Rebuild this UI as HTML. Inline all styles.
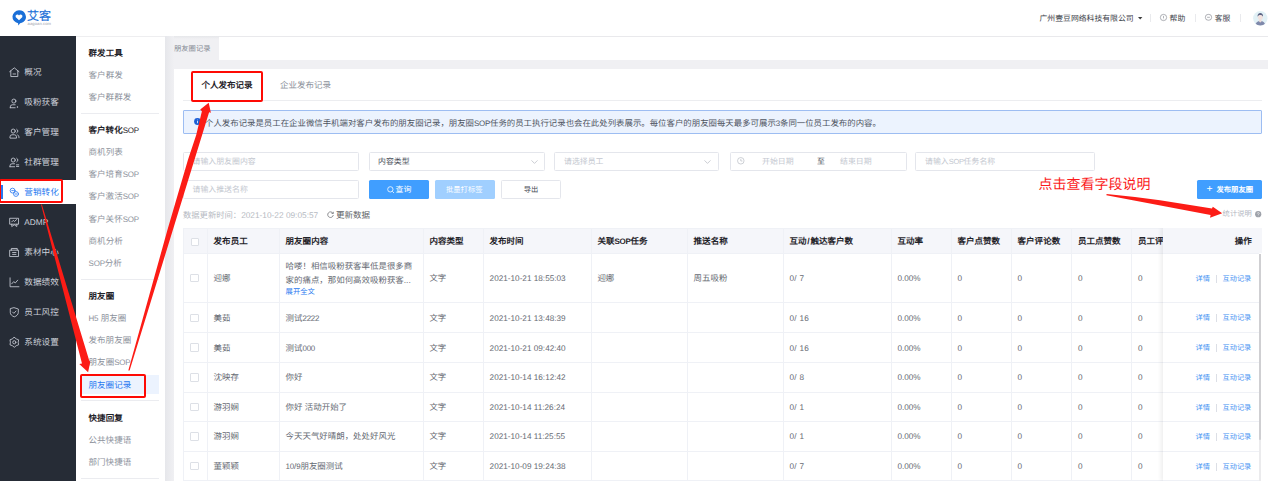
<!DOCTYPE html>
<html lang="zh-CN">
<head>
<meta charset="utf-8">
<title>朋友圈记录</title>
<style>
html,body{margin:0;padding:0;}
body{text-rendering:geometricPrecision;width:1268px;height:481px;overflow:hidden;background:#fff;position:relative;font-family:"Liberation Sans",sans-serif;}
.t{position:absolute;white-space:nowrap;line-height:12px;height:12px;margin:0;padding:0;}
.r{position:absolute;box-sizing:border-box;}
svg{position:absolute;overflow:visible;}
.l{font-size:0.94em;letter-spacing:-0.25px;}
.h .l{font-weight:normal;}
</style>
</head>
<body>

<!-- layout backgrounds -->
<div class="r" style="left:0.00px;top:36.00px;width:165.00px;height:0.80px;background:#eeeef0;"></div>
<div class="r" style="left:0.00px;top:36.00px;width:75.50px;height:445.00px;background:#262c36;"></div>
<div class="r" style="left:75.50px;top:36.80px;width:89.50px;height:445.00px;background:#fff;"></div>
<div class="r" style="left:165.00px;top:36.00px;width:1103.00px;height:445.00px;background:#f0f0f3;"></div>
<div class="r" style="left:165.00px;top:36.00px;width:1103.00px;height:3.00px;background:linear-gradient(180deg,#e6e7ea,#f0f0f3);"></div>
<div class="r" style="left:219.00px;top:36.20px;width:1049.00px;height:24.00px;background:#fff;"></div>
<div class="r" style="left:219.00px;top:36.00px;width:1049.00px;height:0.80px;background:#e9e9ec;"></div>
<div class="r" style="left:165.00px;top:36.20px;width:9.00px;height:445.00px;background:linear-gradient(90deg,#e6e7eb,#f0f0f3);"></div>
<div class="r" style="left:174.00px;top:69.00px;width:1094.00px;height:412.00px;background:#fff;"></div>
<!-- header -->
<svg style="left:12px;top:9.5px" width="14" height="16" viewBox="0 0 14 16"><path d="M7 0.3a6.8 6.5 0 0 1 4.3 11.6 6.8 6.5 0 0 1-3.2 1.3L6.3 15.4 6.1 13.2A6.8 6.5 0 0 1 7 0.3z" fill="#1a6fd8"/><path d="M7 10.2L3.800 7.300a1.700 1.700 0 0 1 3.200-1.800 1.700 1.700 0 0 1 3.200 1.800z" fill="#fff"/></svg>
<div class="t" style="top:10.00px;font-size:12px;color:#1a6fd8;width:24.07px;text-align-last:justify;left:27.00px;-webkit-text-stroke:0.2px #1a6fd8;">艾客</div>
<div class="t" style="top:18.20px;font-size:4.1px;color:#9aa0aa;left:27.50px;letter-spacing:0.1px;">aagoan.com</div>
<div class="t" style="top:12.60px;font-size:7.85px;color:#3a3e47;width:94.17px;text-align-last:justify;left:1039.50px;">广州壹豆网络科技有限公司</div>
<svg style="left:1137.8px;top:16.7px" width="5" height="3" viewBox="0 0 5 3"><path d="M0 0h4.4L2.2 2.6z" fill="#3c3c3c"/></svg>
<div class="r" style="left:1150.30px;top:14.20px;width:0.70px;height:8.20px;background:#e9eaed;"></div>
<svg style="left:1159.9px;top:14.2px" width="7" height="7" viewBox="0 0 7 7"><circle cx="3.5" cy="3.5" r="3.15" fill="none" stroke="#70747d" stroke-width="0.55"/><path d="M3.5 1.9v2.2M3.5 4.7v0.5" stroke="#70747d" stroke-width="0.55"/></svg>
<div class="t" style="top:12.60px;font-size:7.85px;color:#3a3e47;width:15.74px;text-align-last:justify;left:1169.50px;">帮助</div>
<div class="r" style="left:1194.90px;top:14.20px;width:0.70px;height:8.20px;background:#e9eaed;"></div>
<svg style="left:1204.8px;top:14.2px" width="7" height="7" viewBox="0 0 7 7"><rect x="0.4" y="0.4" width="6.2" height="5.8" rx="2.7" fill="none" stroke="#70747d" stroke-width="0.55"/><path d="M2.1 3.3h2.8" stroke="#70747d" stroke-width="0.55"/></svg>
<div class="t" style="top:12.60px;font-size:7.85px;color:#3a3e47;width:15.74px;text-align-last:justify;left:1214.70px;">客服</div>
<div class="r" style="left:1239.90px;top:14.20px;width:0.70px;height:8.20px;background:#e9eaed;"></div>
<svg style="left:1252.8px;top:11.3px" width="15" height="15" viewBox="0 0 15 15"><defs><clipPath id="av"><circle cx="7.3" cy="7.3" r="7.2"/></clipPath></defs><circle cx="7.3" cy="7.3" r="7.2" fill="#e2f1f6"/><g clip-path="url(#av)"><path d="M2.4 15c0-3.4 1.9-4.9 4.9-4.9s4.9 1.500 4.900 4.900z" fill="#7f89ab"/><path d="M6.200 8.500h2.200v2.200l-1.100 0.700-1.100-0.700z" fill="#efdcd8"/><ellipse cx="7.300" cy="5.900" rx="2.500" ry="3" fill="#f1e2df"/><path d="M4.600 5.700c-0.300-2.700 1.100-3.800 2.700-3.800s3 1.100 2.700 3.800c-0.500-1.200-1.300-1.800-2.700-1.800s-2.200 0.600-2.700 1.800z" fill="#5b6384"/></g></svg>
<!-- sidebar -->
<div class="r" style="left:0.00px;top:179.50px;width:75.50px;height:24.30px;background:#fff;"></div>
<div class="r" style="left:1.00px;top:184.50px;width:2.00px;height:14.30px;background:#2878f0;"></div>
<svg style="left:9.2px;top:67.0px" width="10.6" height="10.6" viewBox="0 0 10 10" fill="none" stroke="#cdd1da" stroke-width="0.78" stroke-linecap="round" stroke-linejoin="round"><path d="M0.6 4.4L5 0.8 9.4 4.4M1.7 3.7V9h6.6V3.7M3.8 6.6h2.4"/></svg>
<div class="t" style="top:66.30px;font-size:8.6px;color:#cdd1da;width:17.25px;text-align-last:justify;left:24.30px;">概况</div>
<svg style="left:9.2px;top:97.7px" width="10.6" height="10.6" viewBox="0 0 10 10" fill="none" stroke="#cdd1da" stroke-width="0.78" stroke-linecap="round" stroke-linejoin="round"><circle cx="4.6" cy="2.9" r="1.9"/><path d="M1.2 9.2V8.4a2 2 0 0 1 2-2h2.6M1.2 9.2h4.6"/><circle cx="8" cy="8.6" r="0.7" fill="#cdd1da" stroke="none"/></svg>
<div class="t" style="top:96.40px;font-size:8.6px;color:#cdd1da;width:34.44px;text-align-last:justify;left:24.30px;">吸粉获客</div>
<svg style="left:9.2px;top:127.5px" width="10.6" height="10.6" viewBox="0 0 10 10" fill="none" stroke="#cdd1da" stroke-width="0.78" stroke-linecap="round" stroke-linejoin="round"><circle cx="4" cy="2.9" r="1.9"/><path d="M0.9 9.2V8.4a2 2 0 0 1 2-2h2.2a2 2 0 0 1 2 2v0.8zM7.3 1.2a1.9 1.9 0 0 1 0 3.4M8.2 6.6a2 2 0 0 1 1.2 1.8v0.8"/></svg>
<div class="t" style="top:126.20px;font-size:8.6px;color:#cdd1da;width:34.44px;text-align-last:justify;left:24.30px;">客户管理</div>
<svg style="left:9.2px;top:157.1px" width="10.6" height="10.6" viewBox="0 0 10 10" fill="none" stroke="#cdd1da" stroke-width="0.78" stroke-linecap="round" stroke-linejoin="round"><circle cx="4" cy="2.9" r="1.9"/><path d="M0.9 9.2V8.4a2 2 0 0 1 2-2h2.4M0.9 9.2h4.4M7.3 1.2a1.9 1.9 0 0 1 0 3.4"/><path d="M7 7.4h2.2M7 8.9h2.2" /></svg>
<div class="t" style="top:155.80px;font-size:8.6px;color:#cdd1da;width:34.44px;text-align-last:justify;left:24.30px;">社群管理</div>
<svg style="left:9.2px;top:186.8px" width="10.6" height="10.6" viewBox="0 0 10 10" fill="none" stroke="#2878f0" stroke-width="0.78" stroke-linecap="round" stroke-linejoin="round"><circle cx="3.4" cy="3.4" r="2.3"/><circle cx="6.6" cy="6.6" r="2.3"/><path d="M2.6 3.4h1.6M5.8 6.6h1.6"/></svg>
<div class="t" style="top:185.50px;font-size:8.6px;color:#2878f0;width:34.44px;text-align-last:justify;left:24.30px;">营销转化</div>
<svg style="left:9.2px;top:217.1px" width="10.6" height="10.6" viewBox="0 0 10 10" fill="none" stroke="#cdd1da" stroke-width="0.78" stroke-linecap="round" stroke-linejoin="round"><path d="M1 1.2h8v5.6H1zM2.6 6.8v2.2L5 7.4l2.4 1.6V6.8M2.6 4.6l1.4-1.4 1.2 1 2-1.8"/></svg>
<div class="t" style="top:215.80px;font-size:8.3px;color:#cdd1da;left:24.30px;">ADMP</div>
<svg style="left:9.2px;top:247.1px" width="10.6" height="10.6" viewBox="0 0 10 10" fill="none" stroke="#cdd1da" stroke-width="0.78" stroke-linecap="round" stroke-linejoin="round"><path d="M2.2 3V1.4h5.6V3M1 3h8v6H1zM3.4 5.2h3.2M3.4 7h3.2"/></svg>
<div class="t" style="top:245.80px;font-size:8.6px;color:#cdd1da;width:34.44px;text-align-last:justify;left:24.30px;">素材中心</div>
<svg style="left:9.2px;top:276.9px" width="10.6" height="10.6" viewBox="0 0 10 10" fill="none" stroke="#cdd1da" stroke-width="0.78" stroke-linecap="round" stroke-linejoin="round"><path d="M1 0.8V9.2H9.4M2.6 6.4l1.8-2 1.6 1.2 2.2-2.6"/></svg>
<div class="t" style="top:275.60px;font-size:8.6px;color:#cdd1da;width:34.44px;text-align-last:justify;left:24.30px;">数据绩效</div>
<svg style="left:9.2px;top:307.1px" width="10.6" height="10.6" viewBox="0 0 10 10" fill="none" stroke="#cdd1da" stroke-width="0.78" stroke-linecap="round" stroke-linejoin="round"><path d="M5 0.7l3.8 1.2v3.2c0 2-1.6 3.4-3.8 4.2C2.800 8.500 1.200 7.100 1.200 5.100V1.900zM3.400 4.800l1.200 1.200 2-2.200"/></svg>
<div class="t" style="top:305.80px;font-size:8.6px;color:#cdd1da;width:34.44px;text-align-last:justify;left:24.30px;">员工风控</div>
<svg style="left:9.2px;top:337.1px" width="10.6" height="10.6" viewBox="0 0 10 10" fill="none" stroke="#cdd1da" stroke-width="0.78" stroke-linecap="round" stroke-linejoin="round"><path d="M5.00 0.30 L6.85 1.80 L9.07 2.65 L8.70 5.00 L9.07 7.35 L6.85 8.20 L5.00 9.70 L3.15 8.20 L0.93 7.35 L1.30 5.00 L0.93 2.65 L3.15 1.80z"/><circle cx="5" cy="5" r="1.5"/></svg>
<div class="t" style="top:335.80px;font-size:8.6px;color:#cdd1da;width:34.44px;text-align-last:justify;left:24.30px;">系统设置</div>
<!-- submenu -->
<div class="r" style="left:81.00px;top:375.00px;width:78.00px;height:19.30px;background:#ecf3fe;"></div>
<div class="r" style="left:81.00px;top:112.60px;width:78.00px;height:0.80px;background:#ebecf0;"></div>
<div class="r" style="left:81.00px;top:278.70px;width:78.00px;height:0.80px;background:#ebecf0;"></div>
<div class="r" style="left:81.00px;top:400.40px;width:78.00px;height:0.80px;background:#ebecf0;"></div>
<div class="r" style="left:81.00px;top:478.00px;width:78.00px;height:0.80px;background:#ebecf0;"></div>
<div class="t h" style="top:47.00px;font-size:8.5px;color:#1f2329;width:34.07px;text-align-last:justify;left:88.60px;font-weight:bold;">群发工具</div>
<div class="t" style="top:69.20px;font-size:8.5px;color:#8d929c;width:34.07px;text-align-last:justify;left:88.60px;">客户群发</div>
<div class="t" style="top:91.00px;font-size:8.5px;color:#8d929c;width:42.57px;text-align-last:justify;left:88.60px;">客户群群发</div>
<div class="t h" style="top:124.30px;font-size:8.5px;color:#1f2329;width:50.19px;text-align-last:justify;left:88.60px;font-weight:bold;">客户转化<span class="l">SOP</span></div>
<div class="t" style="top:146.30px;font-size:8.5px;color:#8d929c;width:34.07px;text-align-last:justify;left:88.60px;">商机列表</div>
<div class="t" style="top:168.20px;font-size:8.5px;color:#8d929c;width:50.19px;text-align-last:justify;left:88.60px;">客户培育<span class="l">SOP</span></div>
<div class="t" style="top:190.40px;font-size:8.5px;color:#8d929c;width:50.19px;text-align-last:justify;left:88.60px;">客户激活<span class="l">SOP</span></div>
<div class="t" style="top:212.50px;font-size:8.5px;color:#8d929c;width:50.19px;text-align-last:justify;left:88.60px;">客户关怀<span class="l">SOP</span></div>
<div class="t" style="top:234.50px;font-size:8.5px;color:#8d929c;width:34.07px;text-align-last:justify;left:88.60px;">商机分析</div>
<div class="t" style="top:256.60px;font-size:8.5px;color:#8d929c;width:33.19px;text-align-last:justify;left:88.60px;"><span class="l">SOP</span>分析</div>
<div class="t h" style="top:290.30px;font-size:8.5px;color:#1f2329;width:25.57px;text-align-last:justify;left:88.60px;font-weight:bold;">朋友圈</div>
<div class="t" style="top:311.70px;font-size:8.5px;color:#8d929c;width:37.64px;text-align-last:justify;left:88.60px;"><span class="l">H5</span> 朋友圈</div>
<div class="t" style="top:334.30px;font-size:8.5px;color:#8d929c;width:42.57px;text-align-last:justify;left:88.60px;">发布朋友圈</div>
<div class="t" style="top:356.30px;font-size:8.5px;color:#8d929c;width:41.69px;text-align-last:justify;left:88.60px;">朋友圈<span class="l">SOP</span></div>
<div class="t" style="top:378.50px;font-size:8.5px;color:#2878f0;width:42.57px;text-align-last:justify;left:88.60px;">朋友圈记录</div>
<div class="t h" style="top:412.20px;font-size:8.5px;color:#1f2329;width:34.07px;text-align-last:justify;left:88.60px;font-weight:bold;">快捷回复</div>
<div class="t" style="top:434.00px;font-size:8.5px;color:#8d929c;width:42.57px;text-align-last:justify;left:88.60px;">公共快捷语</div>
<div class="t" style="top:455.80px;font-size:8.5px;color:#8d929c;width:42.57px;text-align-last:justify;left:88.60px;">部门快捷语</div>
<!-- page tab -->
<div class="t" style="top:43.00px;font-size:7.3px;color:#858a94;width:36.53px;text-align-last:justify;left:174.00px;">朋友圈记录</div>
<!-- record tabs -->
<div class="t" style="top:79.20px;font-size:8.5px;color:#1f2329;width:51.07px;text-align-last:justify;left:201.50px;font-weight:bold;">个人发布记录</div>
<div class="t" style="top:79.20px;font-size:8.5px;color:#8d929c;width:51.07px;text-align-last:justify;left:280.00px;">企业发布记录</div>
<div class="r" style="left:183.00px;top:100.30px;width:1079.00px;height:0.80px;background:#ecedf0;"></div>
<!-- info banner -->
<div class="r" style="left:183.00px;top:110.20px;width:1079.00px;height:23.40px;background:#ecf3fe;border:0.8px solid #9dbdf2;border-radius:1px;"></div>
<svg style="left:193.8px;top:118.2px" width="7" height="7" viewBox="0 0 7 7"><circle cx="3.5" cy="3.5" r="3.4" fill="#1c5fd6"/><path d="M3.5 3v2.2M3.5 1.7v0.6" stroke="#fff" stroke-width="0.8"/></svg>
<div class="t" style="top:116.60px;font-size:8.42px;color:#4e535e;width:675.85px;text-align-last:justify;left:205.00px;">个人发布记录是员工在企业微信手机端对客户发布的朋友圈记录，朋友圈<span class="l">SOP</span>任务的员工执行记录也会在此处列表展示。每位客户的朋友圈每天最多可展示<span class="l">3</span>条同一位员工发布的内容。</div>
<!-- filters -->
<div class="r" style="left:183.00px;top:152.40px;width:176.30px;height:18.40px;border:0.8px solid #e4e6ec;border-radius:1.5px;background:#fff;"></div>
<div class="t" style="top:155.80px;font-size:7.9px;color:#c3c7cf;width:63.19px;text-align-last:justify;left:192.50px;">请输入朋友圈内容</div>
<div class="r" style="left:368.70px;top:152.40px;width:176.00px;height:18.40px;border:0.8px solid #e4e6ec;border-radius:1.5px;background:#fff;"></div>
<div class="t" style="top:155.80px;font-size:7.9px;color:#4a4f5a;width:31.63px;text-align-last:justify;left:378.00px;">内容类型</div>
<svg style="left:531px;top:160px" width="7" height="4" viewBox="0 0 7 4"><path d="M0.500 0.400L3.500 3.400 6.500 0.400" fill="none" stroke="#b4b8c0" stroke-width="0.700"/></svg>
<div class="r" style="left:554.00px;top:152.40px;width:164.60px;height:18.40px;border:0.8px solid #e4e6ec;border-radius:1.5px;background:#fff;"></div>
<div class="t" style="top:155.80px;font-size:7.9px;color:#c3c7cf;width:39.52px;text-align-last:justify;left:564.00px;">请选择员工</div>
<svg style="left:704.300px;top:160px" width="7" height="4" viewBox="0 0 7 4"><path d="M0.500 0.400L3.500 3.400 6.500 0.400" fill="none" stroke="#b4b8c0" stroke-width="0.700"/></svg>
<div class="r" style="left:730.20px;top:152.40px;width:176.40px;height:18.40px;border:0.8px solid #e4e6ec;border-radius:1.5px;background:#fff;"></div>
<svg style="left:737.2px;top:157px" width="7.6" height="7.6" viewBox="0 0 7 7"><circle cx="3.500" cy="3.500" r="3" fill="none" stroke="#b4b8c0" stroke-width="0.600"/><path d="M3.500 1.800v1.900h1.500" fill="none" stroke="#b4b8c0" stroke-width="0.600"/></svg>
<div class="t" style="top:155.80px;font-size:7.9px;color:#c3c7cf;width:31.63px;text-align-last:justify;left:762.00px;">开始日期</div>
<div class="t" style="top:155.80px;font-size:7.9px;color:#4a4f5a;left:817.00px;">至</div>
<div class="t" style="top:155.80px;font-size:7.9px;color:#c3c7cf;width:31.63px;text-align-last:justify;left:840.00px;">结束日期</div>
<div class="r" style="left:915.20px;top:152.40px;width:180.20px;height:18.40px;border:0.8px solid #e4e6ec;border-radius:1.5px;background:#fff;"></div>
<div class="t" style="top:155.80px;font-size:7.9px;color:#c3c7cf;width:70.22px;text-align-last:justify;left:925.00px;">请输入<span class="l">SOP</span>任务名称</div>
<div class="r" style="left:183.00px;top:180.40px;width:176.30px;height:18.40px;border:0.8px solid #e4e6ec;border-radius:1.5px;background:#fff;"></div>
<div class="t" style="top:184.40px;font-size:7.9px;color:#c3c7cf;width:55.30px;text-align-last:justify;left:192.50px;">请输入推送名称</div>
<div class="r" style="left:368.70px;top:180.00px;width:60.20px;height:18.90px;background:#409eff;border-radius:1.5px;"></div>
<svg style="left:386.5px;top:185.8px" width="7.8" height="7.8" viewBox="0 0 7 7"><circle cx="3" cy="3" r="2.400" fill="none" stroke="#fff" stroke-width="0.700"/><path d="M4.800 4.800l1.500 1.500" stroke="#fff" stroke-width="0.700"/></svg>
<div class="t" style="top:183.80px;font-size:7.9px;color:#fff;width:15.85px;text-align-last:justify;left:395.50px;">查询</div>
<div class="r" style="left:435.00px;top:180.00px;width:59.60px;height:18.90px;background:#a0cfff;border-radius:1.5px;"></div>
<div class="t" style="top:183.80px;font-size:7.3px;color:#fff;width:36.53px;text-align-last:justify;left:446.00px;">批量打标签</div>
<div class="r" style="left:500.50px;top:180.00px;width:60.20px;height:18.90px;border:0.8px solid #e4e6ec;border-radius:1.5px;background:#fff;"></div>
<div class="t" style="top:183.80px;font-size:7.3px;color:#4a4f5a;width:14.64px;text-align-last:justify;left:523.70px;">导出</div>
<div class="r" style="left:1197.00px;top:180.00px;width:65.00px;height:18.90px;background:#409eff;border-radius:1.5px;"></div>
<div class="t" style="top:183.40px;font-size:10.5px;color:#fff;left:1206.60px;">+</div>
<div class="t" style="top:183.80px;font-size:7.3px;color:#fff;width:36.53px;text-align-last:justify;left:1216.50px;font-weight:bold;">发布朋友圈</div>
<!-- update line -->
<div class="t" style="top:209.20px;font-size:8.3px;color:#b6bac2;width:135.19px;text-align-last:justify;left:183.00px;">数据更新时间：<span>2021-10-22 09:05:57</span></div>
<svg style="left:326.8px;top:210.9px" width="7" height="7" viewBox="0 0 7 7"><path d="M5.900 2.200A2.800 2.800 0 1 0 6.300 4" fill="none" stroke="#606266" stroke-width="0.700"/><path d="M6.300 0.800v1.700H4.600" fill="none" stroke="#606266" stroke-width="0.700"/></svg>
<div class="t" style="top:208.90px;font-size:8.5px;color:#606266;width:34.07px;text-align-last:justify;left:336.00px;">更新数据</div>
<div class="t" style="top:207.90px;font-size:7.3px;color:#b3b7bf;width:29.24px;text-align-last:justify;left:1222.60px;">统计说明</div>
<svg style="left:1255.300px;top:210.700px" width="7" height="7" viewBox="0 0 7 7"><circle cx="3.200" cy="3.200" r="3.100" fill="#9da1a9"/><path d="M2.300 2.500a0.950 0.950 0 1 1 1.300 0.900c-0.300 0.150-0.400 0.300-0.400 0.600M3.200 4.700v0.500" fill="none" stroke="#fff" stroke-width="0.600"/></svg>
<!-- table -->
<div class="r" style="left:183.00px;top:228.00px;width:1079.00px;height:25.20px;background:#f5f6fa;"></div>
<div class="r" style="left:183.00px;top:252.80px;width:1076.00px;height:0.80px;background:#eff1f6;"></div>
<div class="r" style="left:183.00px;top:302.10px;width:1076.00px;height:0.80px;background:#eff1f6;"></div>
<div class="r" style="left:183.00px;top:332.10px;width:1076.00px;height:0.80px;background:#eff1f6;"></div>
<div class="r" style="left:183.00px;top:361.80px;width:1076.00px;height:0.80px;background:#eff1f6;"></div>
<div class="r" style="left:183.00px;top:391.60px;width:1076.00px;height:0.80px;background:#eff1f6;"></div>
<div class="r" style="left:183.00px;top:420.90px;width:1076.00px;height:0.80px;background:#eff1f6;"></div>
<div class="r" style="left:183.00px;top:450.60px;width:1076.00px;height:0.80px;background:#eff1f6;"></div>
<div class="r" style="left:183.00px;top:480.00px;width:1076.00px;height:0.80px;background:#eff1f6;"></div>
<div class="r" style="left:182.60px;top:228.00px;width:0.80px;height:253.60px;background:#eff1f6;"></div>
<div class="r" style="left:207.00px;top:228.00px;width:0.80px;height:253.60px;background:#eff1f6;"></div>
<div class="r" style="left:279.00px;top:228.00px;width:0.80px;height:253.60px;background:#eff1f6;"></div>
<div class="r" style="left:422.80px;top:228.00px;width:0.80px;height:253.60px;background:#eff1f6;"></div>
<div class="r" style="left:482.80px;top:228.00px;width:0.80px;height:253.60px;background:#eff1f6;"></div>
<div class="r" style="left:591.00px;top:228.00px;width:0.80px;height:253.60px;background:#eff1f6;"></div>
<div class="r" style="left:687.00px;top:228.00px;width:0.80px;height:253.60px;background:#eff1f6;"></div>
<div class="r" style="left:782.80px;top:228.00px;width:0.80px;height:253.60px;background:#eff1f6;"></div>
<div class="r" style="left:890.80px;top:228.00px;width:0.80px;height:253.60px;background:#eff1f6;"></div>
<div class="r" style="left:950.80px;top:228.00px;width:0.80px;height:253.60px;background:#eff1f6;"></div>
<div class="r" style="left:1010.60px;top:228.00px;width:0.80px;height:253.60px;background:#eff1f6;"></div>
<div class="r" style="left:1071.00px;top:228.00px;width:0.80px;height:253.60px;background:#eff1f6;"></div>
<div class="r" style="left:1131.00px;top:228.00px;width:0.80px;height:253.60px;background:#eff1f6;"></div>
<div class="r" style="left:183.00px;top:228.00px;width:1079.00px;height:0.80px;background:#eff1f6;"></div>
<div class="t" style="top:235.20px;font-size:8.5px;color:#1f2329;width:34.07px;text-align-last:justify;left:213.60px;font-weight:bold;">发布员工</div>
<div class="t" style="top:235.20px;font-size:8.5px;color:#1f2329;width:42.57px;text-align-last:justify;left:285.60px;font-weight:bold;">朋友圈内容</div>
<div class="t" style="top:235.20px;font-size:8.5px;color:#1f2329;width:34.07px;text-align-last:justify;left:429.40px;font-weight:bold;">内容类型</div>
<div class="t" style="top:235.20px;font-size:8.5px;color:#1f2329;width:34.07px;text-align-last:justify;left:489.40px;font-weight:bold;">发布时间</div>
<div class="t" style="top:235.20px;font-size:8.5px;color:#1f2329;width:50.21px;text-align-last:justify;left:597.40px;font-weight:bold;">关联<span class="l">SOP</span>任务</div>
<div class="t" style="top:235.20px;font-size:8.5px;color:#1f2329;width:34.07px;text-align-last:justify;left:693.60px;font-weight:bold;">推送名称</div>
<div class="t" style="top:235.20px;font-size:8.5px;color:#1f2329;width:63.55px;text-align-last:justify;left:789.40px;font-weight:bold;">互动<span style="padding:0 0.8px">/</span>触达客户数</div>
<div class="t" style="top:235.20px;font-size:8.5px;color:#1f2329;width:25.57px;text-align-last:justify;left:897.40px;font-weight:bold;">互动率</div>
<div class="t" style="top:235.20px;font-size:8.5px;color:#1f2329;width:42.57px;text-align-last:justify;left:957.40px;font-weight:bold;">客户点赞数</div>
<div class="t" style="top:235.20px;font-size:8.5px;color:#1f2329;width:42.57px;text-align-last:justify;left:1017.60px;font-weight:bold;">客户评论数</div>
<div class="t" style="top:235.20px;font-size:8.5px;color:#1f2329;width:42.57px;text-align-last:justify;left:1078.00px;font-weight:bold;">员工点赞数</div>
<div class="t" style="top:235.20px;font-size:8.5px;color:#1f2329;width:42.57px;text-align-last:justify;left:1138.00px;font-weight:bold;">员工评论数</div>
<div class="r" style="left:190.90px;top:237.50px;width:8.50px;height:8.50px;border:0.8px solid #dde0e6;border-radius:1px;background:#fff;"></div>
<div class="r" style="left:190.40px;top:273.85px;width:8.60px;height:8.60px;border:0.8px solid #dde0e6;border-radius:1px;background:#fff;"></div>
<div class="t" style="top:272.15px;font-size:8.45px;color:#666a73;width:16.93px;text-align-last:justify;left:213.60px;">迎娜</div>
<div class="t" style="top:260.20px;font-size:8.45px;color:#666a73;width:126.61px;text-align-last:justify;left:285.60px;">哈喽！相信吸粉获客率低是很多商</div>
<div class="t" style="top:274.10px;font-size:8.45px;color:#666a73;width:125.21px;text-align-last:justify;left:285.60px;">家的痛点，那如何高效吸粉获客...</div>
<div class="t" style="top:286.10px;font-size:7.3px;color:#2878f0;width:29.24px;text-align-last:justify;left:285.60px;">展开全文</div>
<div class="t" style="top:272.15px;font-size:8.45px;color:#666a73;width:16.93px;text-align-last:justify;left:429.40px;">文字</div>
<div class="t" style="top:273.05px;font-size:8.2px;color:#666a73;left:489.60px;">2021-10-21 18:55:03</div>
<div class="t" style="top:272.15px;font-size:8.45px;color:#666a73;width:16.93px;text-align-last:justify;left:597.40px;">迎娜</div>
<div class="t" style="top:272.15px;font-size:8.45px;color:#666a73;width:33.80px;text-align-last:justify;left:693.60px;">周五吸粉</div>
<div class="t" style="top:273.05px;font-size:8.2px;color:#666a73;left:789.40px;letter-spacing:0.3px;">0/ 7</div>
<div class="t" style="top:273.05px;font-size:8.2px;color:#666a73;left:897.40px;">0.00%</div>
<div class="t" style="top:273.05px;font-size:8.2px;color:#666a73;left:957.40px;">0</div>
<div class="t" style="top:273.05px;font-size:8.2px;color:#666a73;left:1017.60px;">0</div>
<div class="t" style="top:273.05px;font-size:8.2px;color:#666a73;left:1078.00px;">0</div>
<div class="t" style="top:273.05px;font-size:8.2px;color:#666a73;left:1138.00px;">0</div>
<div class="r" style="left:190.40px;top:313.50px;width:8.60px;height:8.60px;border:0.8px solid #dde0e6;border-radius:1px;background:#fff;"></div>
<div class="t" style="top:311.80px;font-size:8.45px;color:#666a73;width:16.93px;text-align-last:justify;left:213.60px;">美茹</div>
<div class="t" style="top:311.80px;font-size:8.45px;color:#666a73;width:33.60px;text-align-last:justify;left:285.60px;">测试<span class="l">2222</span></div>
<div class="t" style="top:311.80px;font-size:8.45px;color:#666a73;width:16.93px;text-align-last:justify;left:429.40px;">文字</div>
<div class="t" style="top:312.70px;font-size:8.2px;color:#666a73;left:489.60px;">2021-10-21 13:48:39</div>
<div class="t" style="top:312.70px;font-size:8.2px;color:#666a73;left:789.40px;letter-spacing:0.3px;">0/ 16</div>
<div class="t" style="top:312.70px;font-size:8.2px;color:#666a73;left:897.40px;">0.00%</div>
<div class="t" style="top:312.70px;font-size:8.2px;color:#666a73;left:957.40px;">0</div>
<div class="t" style="top:312.70px;font-size:8.2px;color:#666a73;left:1017.60px;">0</div>
<div class="t" style="top:312.70px;font-size:8.2px;color:#666a73;left:1078.00px;">0</div>
<div class="t" style="top:312.70px;font-size:8.2px;color:#666a73;left:1138.00px;">0</div>
<div class="r" style="left:190.40px;top:343.35px;width:8.60px;height:8.60px;border:0.8px solid #dde0e6;border-radius:1px;background:#fff;"></div>
<div class="t" style="top:341.65px;font-size:8.45px;color:#666a73;width:16.93px;text-align-last:justify;left:213.60px;">美茹</div>
<div class="t" style="top:341.65px;font-size:8.45px;color:#666a73;width:29.43px;text-align-last:justify;left:285.60px;">测试<span class="l">000</span></div>
<div class="t" style="top:341.65px;font-size:8.45px;color:#666a73;width:16.93px;text-align-last:justify;left:429.40px;">文字</div>
<div class="t" style="top:342.55px;font-size:8.2px;color:#666a73;left:489.60px;">2021-10-21 09:42:40</div>
<div class="t" style="top:342.55px;font-size:8.2px;color:#666a73;left:789.40px;letter-spacing:0.3px;">0/ 16</div>
<div class="t" style="top:342.55px;font-size:8.2px;color:#666a73;left:897.40px;">0.00%</div>
<div class="t" style="top:342.55px;font-size:8.2px;color:#666a73;left:957.40px;">0</div>
<div class="t" style="top:342.55px;font-size:8.2px;color:#666a73;left:1017.60px;">0</div>
<div class="t" style="top:342.55px;font-size:8.2px;color:#666a73;left:1078.00px;">0</div>
<div class="t" style="top:342.55px;font-size:8.2px;color:#666a73;left:1138.00px;">0</div>
<div class="r" style="left:190.40px;top:373.10px;width:8.60px;height:8.60px;border:0.8px solid #dde0e6;border-radius:1px;background:#fff;"></div>
<div class="t" style="top:371.40px;font-size:8.45px;color:#666a73;width:25.36px;text-align-last:justify;left:213.60px;">沈映存</div>
<div class="t" style="top:371.40px;font-size:8.45px;color:#666a73;width:16.93px;text-align-last:justify;left:285.60px;">你好</div>
<div class="t" style="top:371.40px;font-size:8.45px;color:#666a73;width:16.93px;text-align-last:justify;left:429.40px;">文字</div>
<div class="t" style="top:372.30px;font-size:8.2px;color:#666a73;left:489.60px;">2021-10-14 16:12:42</div>
<div class="t" style="top:372.30px;font-size:8.2px;color:#666a73;left:789.40px;letter-spacing:0.3px;">0/ 8</div>
<div class="t" style="top:372.30px;font-size:8.2px;color:#666a73;left:897.40px;">0.00%</div>
<div class="t" style="top:372.30px;font-size:8.2px;color:#666a73;left:957.40px;">0</div>
<div class="t" style="top:372.30px;font-size:8.2px;color:#666a73;left:1017.60px;">0</div>
<div class="t" style="top:372.30px;font-size:8.2px;color:#666a73;left:1078.00px;">0</div>
<div class="t" style="top:372.30px;font-size:8.2px;color:#666a73;left:1138.00px;">0</div>
<div class="r" style="left:190.40px;top:402.65px;width:8.60px;height:8.60px;border:0.8px solid #dde0e6;border-radius:1px;background:#fff;"></div>
<div class="t" style="top:400.95px;font-size:8.45px;color:#666a73;width:25.36px;text-align-last:justify;left:213.60px;">游羽娴</div>
<div class="t" style="top:400.95px;font-size:8.45px;color:#666a73;width:61.46px;text-align-last:justify;left:285.60px;">你好 活动开始了</div>
<div class="t" style="top:400.95px;font-size:8.45px;color:#666a73;width:16.93px;text-align-last:justify;left:429.40px;">文字</div>
<div class="t" style="top:401.85px;font-size:8.2px;color:#666a73;left:489.60px;">2021-10-14 11:26:24</div>
<div class="t" style="top:401.85px;font-size:8.2px;color:#666a73;left:789.40px;letter-spacing:0.3px;">0/ 1</div>
<div class="t" style="top:401.85px;font-size:8.2px;color:#666a73;left:897.40px;">0.00%</div>
<div class="t" style="top:401.85px;font-size:8.2px;color:#666a73;left:957.40px;">0</div>
<div class="t" style="top:401.85px;font-size:8.2px;color:#666a73;left:1017.60px;">0</div>
<div class="t" style="top:401.85px;font-size:8.2px;color:#666a73;left:1078.00px;">0</div>
<div class="t" style="top:401.85px;font-size:8.2px;color:#666a73;left:1138.00px;">0</div>
<div class="r" style="left:190.40px;top:432.15px;width:8.60px;height:8.60px;border:0.8px solid #dde0e6;border-radius:1px;background:#fff;"></div>
<div class="t" style="top:430.45px;font-size:8.45px;color:#666a73;width:25.36px;text-align-last:justify;left:213.60px;">游羽娴</div>
<div class="t" style="top:430.45px;font-size:8.45px;color:#666a73;width:109.74px;text-align-last:justify;left:285.60px;">今天天气好晴朗，处处好风光</div>
<div class="t" style="top:430.45px;font-size:8.45px;color:#666a73;width:16.93px;text-align-last:justify;left:429.40px;">文字</div>
<div class="t" style="top:431.35px;font-size:8.2px;color:#666a73;left:489.60px;">2021-10-14 11:25:55</div>
<div class="t" style="top:431.35px;font-size:8.2px;color:#666a73;left:789.40px;letter-spacing:0.3px;">0/ 1</div>
<div class="t" style="top:431.35px;font-size:8.2px;color:#666a73;left:897.40px;">0.00%</div>
<div class="t" style="top:431.35px;font-size:8.2px;color:#666a73;left:957.40px;">0</div>
<div class="t" style="top:431.35px;font-size:8.2px;color:#666a73;left:1017.60px;">0</div>
<div class="t" style="top:431.35px;font-size:8.2px;color:#666a73;left:1078.00px;">0</div>
<div class="t" style="top:431.35px;font-size:8.2px;color:#666a73;left:1138.00px;">0</div>
<div class="r" style="left:190.40px;top:461.70px;width:8.60px;height:8.60px;border:0.8px solid #dde0e6;border-radius:1px;background:#fff;"></div>
<div class="t" style="top:460.00px;font-size:8.45px;color:#666a73;width:25.36px;text-align-last:justify;left:213.60px;">董颖颖</div>
<div class="t" style="top:460.00px;font-size:8.45px;color:#666a73;width:57.11px;text-align-last:justify;left:285.60px;"><span class="l">10</span>/<span class="l">9</span>朋友圈测试</div>
<div class="t" style="top:460.00px;font-size:8.45px;color:#666a73;width:16.93px;text-align-last:justify;left:429.40px;">文字</div>
<div class="t" style="top:460.90px;font-size:8.2px;color:#666a73;left:489.60px;">2021-10-09 19:24:38</div>
<div class="t" style="top:460.90px;font-size:8.2px;color:#666a73;left:789.40px;letter-spacing:0.3px;">0/ 7</div>
<div class="t" style="top:460.90px;font-size:8.2px;color:#666a73;left:897.40px;">0.00%</div>
<div class="t" style="top:460.90px;font-size:8.2px;color:#666a73;left:957.40px;">0</div>
<div class="t" style="top:460.90px;font-size:8.2px;color:#666a73;left:1017.60px;">0</div>
<div class="t" style="top:460.90px;font-size:8.2px;color:#666a73;left:1078.00px;">0</div>
<div class="t" style="top:460.90px;font-size:8.2px;color:#666a73;left:1138.00px;">0</div>
<!-- fixed operation column -->
<div class="r" style="left:1150px;top:228px;width:118px;height:253.6px;overflow:hidden;"><div class="r" style="left:13px;top:0;width:96px;height:253px;background:#fff;box-shadow:-2px 0 4px rgba(0,0,0,0.07);"></div></div>
<div class="r" style="left:1163.00px;top:228.00px;width:99.00px;height:25.20px;background:#f5f6fa;"></div>
<div class="r" style="left:1163.00px;top:252.80px;width:96.00px;height:0.80px;background:#eff1f6;"></div>
<div class="r" style="left:1163.00px;top:302.10px;width:96.00px;height:0.80px;background:#eff1f6;"></div>
<div class="r" style="left:1163.00px;top:332.10px;width:96.00px;height:0.80px;background:#eff1f6;"></div>
<div class="r" style="left:1163.00px;top:361.80px;width:96.00px;height:0.80px;background:#eff1f6;"></div>
<div class="r" style="left:1163.00px;top:391.60px;width:96.00px;height:0.80px;background:#eff1f6;"></div>
<div class="r" style="left:1163.00px;top:420.90px;width:96.00px;height:0.80px;background:#eff1f6;"></div>
<div class="r" style="left:1163.00px;top:450.60px;width:96.00px;height:0.80px;background:#eff1f6;"></div>
<div class="r" style="left:1163.00px;top:480.00px;width:96.00px;height:0.80px;background:#eff1f6;"></div>
<div class="t" style="top:235.20px;font-size:8.5px;color:#1f2329;width:17.07px;text-align-last:justify;right:16.20px;font-weight:bold;">操作</div>
<div class="t" style="top:272.75px;font-size:7.2px;color:#4190f2;width:14.44px;text-align-last:justify;left:1195.40px;">详情</div>
<div class="r" style="left:1216.00px;top:274.75px;width:0.70px;height:8.00px;background:#dcdfe6;"></div>
<div class="t" style="top:272.75px;font-size:7.15px;color:#4190f2;width:28.63px;text-align-last:justify;left:1222.60px;">互动记录</div>
<div class="t" style="top:312.40px;font-size:7.2px;color:#4190f2;width:14.44px;text-align-last:justify;left:1195.40px;">详情</div>
<div class="r" style="left:1216.00px;top:314.40px;width:0.70px;height:8.00px;background:#dcdfe6;"></div>
<div class="t" style="top:312.40px;font-size:7.15px;color:#4190f2;width:28.63px;text-align-last:justify;left:1222.60px;">互动记录</div>
<div class="t" style="top:342.25px;font-size:7.2px;color:#4190f2;width:14.44px;text-align-last:justify;left:1195.40px;">详情</div>
<div class="r" style="left:1216.00px;top:344.25px;width:0.70px;height:8.00px;background:#dcdfe6;"></div>
<div class="t" style="top:342.25px;font-size:7.15px;color:#4190f2;width:28.63px;text-align-last:justify;left:1222.60px;">互动记录</div>
<div class="t" style="top:372.00px;font-size:7.2px;color:#4190f2;width:14.44px;text-align-last:justify;left:1195.40px;">详情</div>
<div class="r" style="left:1216.00px;top:374.00px;width:0.70px;height:8.00px;background:#dcdfe6;"></div>
<div class="t" style="top:372.00px;font-size:7.15px;color:#4190f2;width:28.63px;text-align-last:justify;left:1222.60px;">互动记录</div>
<div class="t" style="top:401.55px;font-size:7.2px;color:#4190f2;width:14.44px;text-align-last:justify;left:1195.40px;">详情</div>
<div class="r" style="left:1216.00px;top:403.55px;width:0.70px;height:8.00px;background:#dcdfe6;"></div>
<div class="t" style="top:401.55px;font-size:7.15px;color:#4190f2;width:28.63px;text-align-last:justify;left:1222.60px;">互动记录</div>
<div class="t" style="top:431.05px;font-size:7.2px;color:#4190f2;width:14.44px;text-align-last:justify;left:1195.40px;">详情</div>
<div class="r" style="left:1216.00px;top:433.05px;width:0.70px;height:8.00px;background:#dcdfe6;"></div>
<div class="t" style="top:431.05px;font-size:7.15px;color:#4190f2;width:28.63px;text-align-last:justify;left:1222.60px;">互动记录</div>
<div class="t" style="top:460.60px;font-size:7.2px;color:#4190f2;width:14.44px;text-align-last:justify;left:1195.40px;">详情</div>
<div class="r" style="left:1216.00px;top:462.60px;width:0.70px;height:8.00px;background:#dcdfe6;"></div>
<div class="t" style="top:460.60px;font-size:7.15px;color:#4190f2;width:28.63px;text-align-last:justify;left:1222.60px;">互动记录</div>
<div class="r" style="left:1258.60px;top:253.60px;width:2.80px;height:228.00px;background:#ebebed;"></div>
<div class="r" style="left:1258.60px;top:253.60px;width:2.80px;height:186.40px;background:#cfcfd2;border-radius:0 0 1.4px 1.4px;"></div>
<!-- annotations -->
<div class="r" style="left:191.20px;top:71.20px;width:72.00px;height:30.50px;border:2px solid #fe0a04;border-radius:2px;"></div>
<div class="r" style="left:-1.00px;top:179.40px;width:63.80px;height:23.40px;border:2px solid #fe0a04;border-radius:2px;"></div>
<div class="r" style="left:80.20px;top:374.00px;width:65.50px;height:24.00px;border:2px solid #fe0a04;border-radius:2px;"></div>
<svg style="left:0;top:0" width="1268" height="481" viewBox="0 0 1268 481"><g fill="#fc1c16"><polygon points="41,204.500 41.900,204.500 89.200,360.500 90.300,361.800 88.100,372.200 79.300,364 82,363.400"/><polygon points="128.3,370.5 129.6,370.5 209.1,112.2 210.9,112.7 208.7,102.8 200.2,109.6 201.9,111.2 196.2,135 187.9,160 167.4,230"/><polygon points="1106.4,195.3 1106.6,194 1135,197 1160,200.3 1190,204.9 1212,208.500 1212.800,206.700 1222.200,213.200 1210,217.800 1210.600,215"/></g></svg>
<div class="t" style="top:177.60px;font-size:14px;color:#fb1c1c;width:112.05px;text-align-last:justify;left:1038.50px;line-height:16px;height:16px;top:175.600px;">点击查看字段说明</div>
</body>
</html>
